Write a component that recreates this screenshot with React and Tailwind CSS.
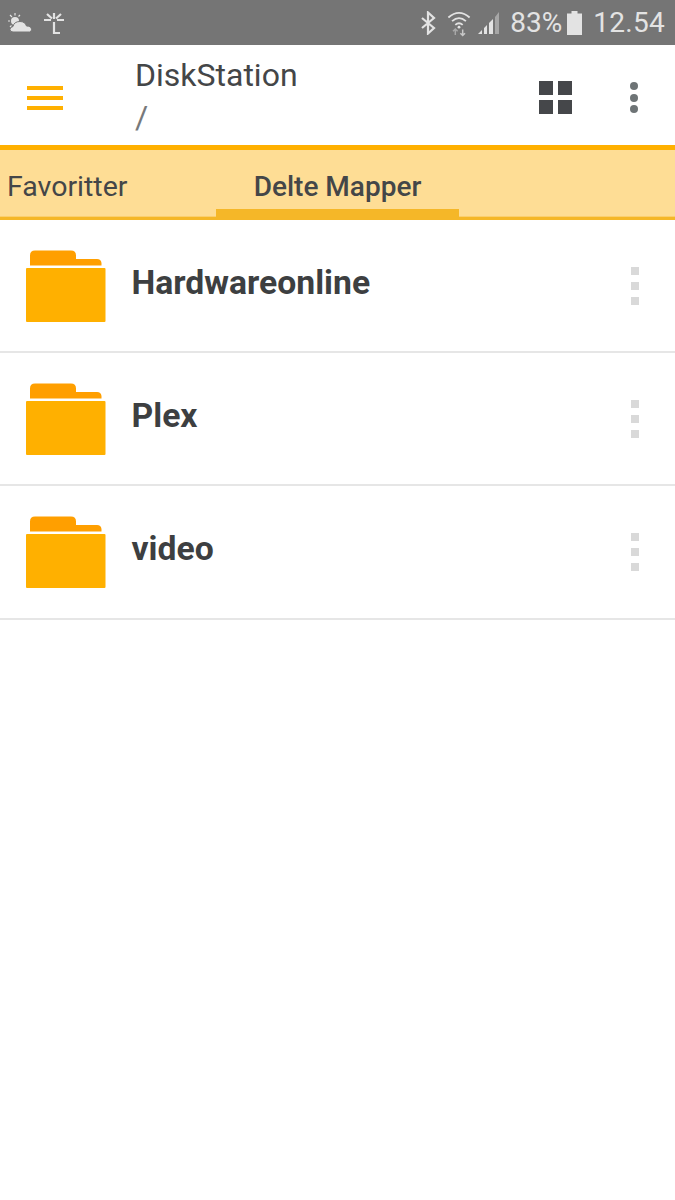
import React from 'react';

const folders = ['Hardwareonline', 'Plex', 'video'];

function FolderIcon() {
  return (
    <svg width="80" height="72" viewBox="0 0 80 72" className="shrink-0">
      <path d="M4 15.500V5.500q0-5 5-5h36q5 0 5 5v3.500h21q4 0 4.500 4v2.500z" fill="#ff9f00" />
      <rect x="0" y="18" width="79.500" height="54" rx="1" fill="#ffb000" />
    </svg>
  );
}

function StatusBar() {
  return (
    <div className="h-[45px] bg-[#757575] flex items-center justify-between pl-[8px] pr-[10px] text-[#e3e3e3]">
      <div className="flex items-center gap-[10px]">
        {/* weather */}
        <svg width="25" height="22" viewBox="0 0 25 22" fill="#e3e3e3">
          <circle cx="7" cy="9" r="4" />
          <path d="M2 3l2 2M7 1v2.500M12 3l-1.500 1.500M0 9h2M2 15l1.500-1.500" stroke="#e3e3e3" strokeWidth="1.200" />
          <path d="M5 20q-3 0-3-2.500t3-3q1-5 7-5 5 0 6.500 4.500 5 0 5 3.500 0 2.500-2 2.500z" stroke="#757575" strokeWidth="1" />
        </svg>
        {/* network glyph */}
        <svg width="22" height="24" viewBox="0 0 22 24" fill="none" stroke="#e3e3e3" strokeWidth="2.200">
          <path d="M11 2v6M1 9h7M14 9h7M4 3l5 4.500M18 3l-5 4.500M11 11v11h6" />
        </svg>
      </div>
      <div className="flex items-center">
        <svg width="16" height="24" viewBox="0 0 16 24" fill="none" stroke="#e3e3e3" strokeWidth="2.200" className="mr-[11px]">
          <path d="M2 7l12 10-6 5.500V1.500l6 5.500L2 17" />
        </svg>
        <svg width="24" height="28" viewBox="0 0 26 28" fill="none" className="mr-[6px]">
          <path d="M1.500 8q11.500-10 23 0" stroke="#e3e3e3" strokeWidth="2" />
          <path d="M5.500 12q7.500-6.500 15 0" stroke="#e3e3e3" strokeWidth="2" />
          <path d="M9 16q4-3.500 8 0" stroke="#e3e3e3" strokeWidth="2" />
          <circle cx="13" cy="18.500" r="1.500" fill="#e3e3e3" />
          <path d="M9 27v-6M6.500 23l2.500-2.500 2.500 2.500" stroke="#a8a8a8" strokeWidth="1.600" />
          <path d="M17 21v6M14.500 25l2.500 2.500 2.500-2.500" stroke="#c8c8c8" strokeWidth="1.600" />
        </svg>
        <svg width="24" height="24" viewBox="0 0 24 24" className="mr-[9px]">
          <path d="M1 23l4-4v4z M7 23v-6l3-3v9z" fill="#e3e3e3" />
          <path d="M12 23V12l4-4v15z" fill="#e3e3e3" />
          <path d="M18 23V6l4-5v22z" fill="#a6a6a6" />
        </svg>
        <span className="text-[28px] leading-none font-['Roboto',sans-serif] mr-[5px]">83%</span>
        <svg width="15" height="24" viewBox="0 0 15 24" fill="#e3e3e3" className="mr-[11px]">
          <path d="M4.500 0h6v2.500H15V24H0V2.500h4.500z" />
        </svg>
        <span className="text-[28px] leading-none tracking-[0.3px] font-['Roboto',sans-serif]">12.54</span>
      </div>
    </div>
  );
}

function Header() {
  return (
    <div className="h-[100px] pt-[5px] bg-white flex items-center">
      <div className="w-[135px] pl-[27px] shrink-0">
        <div className="w-[36px] flex flex-col gap-[6px]">
          <div className="h-[4px] bg-[#ffb000]" />
          <div className="h-[4px] bg-[#ffb000]" />
          <div className="h-[4px] bg-[#ffb000]" />
        </div>
      </div>
      <div className="flex-1 pb-[4px] text-[#444648] text-[32px] leading-[42px] font-['Roboto',sans-serif]">
        <div>DiskStation</div>
        <div className="text-[#77797b]">/</div>
      </div>
      <div className="w-[33px] h-[33px] grid grid-cols-2 gap-[5px] mr-[58px]">
        <div className="bg-[#45474a]" />
        <div className="bg-[#45474a]" />
        <div className="bg-[#45474a]" />
        <div className="bg-[#45474a]" />
      </div>
      <div className="flex flex-col gap-[3.500px] mr-[37px]">
        <div className="w-[8px] h-[8px] rounded-full bg-[#6e7476]" />
        <div className="w-[8px] h-[8px] rounded-full bg-[#6e7476]" />
        <div className="w-[8px] h-[8px] rounded-full bg-[#6e7476]" />
      </div>
    </div>
  );
}

function Tabs() {
  return (
    <div className="h-[75px] bg-[#fedd95] border-t-[5px] border-[#ffb000] flex items-stretch font-['Roboto',sans-serif] text-[#444648] text-[28.500px]">
      <div className="w-[216px] pl-[7px] pt-[16px] border-b-[3px] border-[#f5b728] shadow-[inset_0_-1px_0_#fbcf6f] shrink-0">
        Favoritter
      </div>
      <div className="w-[243px] pt-[16px] text-center font-medium text-[28px] border-b-[11px] border-[#f5b728] shrink-0">
        Delte Mapper
      </div>
      <div className="flex-1 border-b-[3px] border-[#f5b728] shadow-[inset_0_-1px_0_#fbcf6f]" />
    </div>
  );
}

function FolderRow({ name }) {
  return (
    <div className="h-[133.200px] border-b-2 border-[#e6e6e6] flex items-center pl-[26px]">
      <FolderIcon />
      <div className="flex-1 pl-[25.500px] pb-[5px] text-[33.700px] font-bold text-[#3d3f41] font-['Roboto',sans-serif]">{name}</div>
      <div className="flex flex-col gap-[7px] mr-[36px]">
        <div className="w-[8px] h-[8px] bg-[#d9d9d9]" />
        <div className="w-[8px] h-[8px] bg-[#d9d9d9]" />
        <div className="w-[8px] h-[8px] bg-[#d9d9d9]" />
      </div>
    </div>
  );
}

export default function App() {
  return (
    <div className="w-[675px] h-[1200px] bg-white overflow-hidden">
      <StatusBar />
      <Header />
      <Tabs />
      {folders.map((name) => (
        <FolderRow key={name} name={name} />
      ))}
    </div>
  );
}
